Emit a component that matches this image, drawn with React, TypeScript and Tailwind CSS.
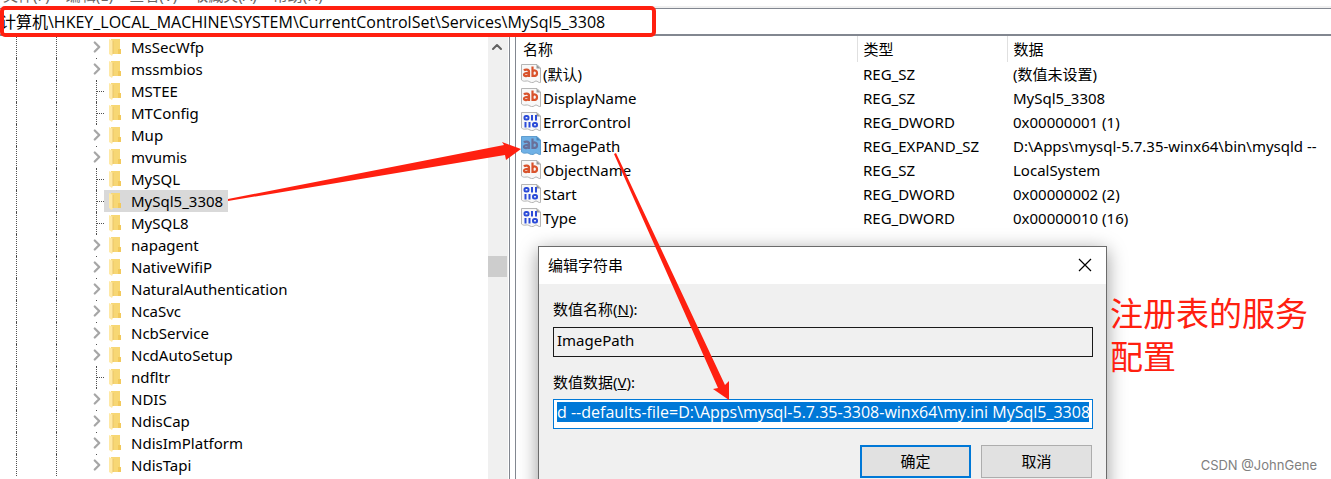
import { ChevronRight, ChevronUp } from "lucide-react";

interface TreeKey {
  name: string;
  leaf?: boolean;
  selected?: boolean;
}

interface RegValue {
  name: string;
  kind: "text" | "binary";
  type: string;
  data: string;
  selected?: boolean;
}

const MENU = ["文件(F)", "编辑(E)", "查看(V)", "收藏夹(A)", "帮助(H)"];

const KEYS: TreeKey[] = [
  { name: "MsSecWfp" },
  { name: "mssmbios" },
  { name: "MSTEE", leaf: true },
  { name: "MTConfig", leaf: true },
  { name: "Mup" },
  { name: "mvumis" },
  { name: "MySQL", leaf: true },
  { name: "MySql5_3308", leaf: true, selected: true },
  { name: "MySQL8", leaf: true },
  { name: "napagent" },
  { name: "NativeWifiP" },
  { name: "NaturalAuthentication" },
  { name: "NcaSvc" },
  { name: "NcbService" },
  { name: "NcdAutoSetup" },
  { name: "ndfltr", leaf: true },
  { name: "NDIS" },
  { name: "NdisCap" },
  { name: "NdisImPlatform" },
  { name: "NdisTapi" },
];

const VALUES: RegValue[] = [
  { name: "(默认)", kind: "text", type: "REG_SZ", data: "(数值未设置)" },
  { name: "DisplayName", kind: "text", type: "REG_SZ", data: "MySql5_3308" },
  { name: "ErrorControl", kind: "binary", type: "REG_DWORD", data: "0x00000001 (1)" },
  {
    name: "ImagePath",
    kind: "text",
    type: "REG_EXPAND_SZ",
    data: "D:\\Apps\\mysql-5.7.35-winx64\\bin\\mysqld --",
    selected: true,
  },
  { name: "ObjectName", kind: "text", type: "REG_SZ", data: "LocalSystem" },
  { name: "Start", kind: "binary", type: "REG_DWORD", data: "0x00000002 (2)" },
  { name: "Type", kind: "binary", type: "REG_DWORD", data: "0x00000010 (16)" },
];

function FolderIcon() {
  return (
    <svg width="12" height="18" viewBox="0 0 12 18" className="shrink-0">
      <path d="M2 1h9v10l1 1v4H3z" fill="#f7d774" />
      <path d="M9 11h3v5H9z" fill="#f2c95c" />
      <path d="M0 1l4 2v13l-1 2-3-2z" fill="#ffe9a6" />
      <path d="M4 3v13" stroke="#e9c469" strokeWidth="1" />
    </svg>
  );
}

function ValueIcon({ kind, selected }: { kind: RegValue["kind"]; selected?: boolean }) {
  return (
    <svg width="20" height="20" viewBox="0 0 20 20" className="shrink-0">
      <path
        d="M.5 .5H16L19.500 4v14.500c-2 .500-3-1.500-4.500-1.500-1.500 0-2 2-4.500 1.500S7.500 16.500 5 17s-3 0-4.500-1z"
        fill={selected ? "#6fb1e6" : "#f8f8f8"}
        stroke={selected ? "#5f9dcf" : "#b5b5b5"}
      />
      <path d="M15.500 .5V4.500h4z" fill={selected ? "#4a86ba" : "#999"} />
      {kind === "text" ? (
        <g fill="none" stroke={selected ? "#69709a" : "#d9532c"} strokeWidth="2.200">
          <path d="M3 6.500c1-1.300 5-1.500 5 1V13M8 9c-3-.300-5 .300-5 1.800 0 2 4 1.600 5-.500" />
          <path d="M11.500 2.500V13M11.500 8c1-2.500 4.500-2 4.500 1.200s-3.500 3.500-4.500 1.500" />
        </g>
      ) : (
        <g fill="none" stroke="#2b4bd8" strokeWidth="2">
          <rect x="3.500" y="4" width="4" height="3.500" rx="1.500" />
          <path d="M11 3v5.500M15 3v5.500M4.500 10v5.500M8.500 10v5.500" />
          <rect x="12" y="11" width="4" height="3.500" rx="1.500" />
        </g>
      )}
    </svg>
  );
}

function TreeRow({ item }: { item: TreeKey }) {
  return (
    <li className="flex h-[22px] items-center">
      <span className="ml-4 h-full w-10 shrink-0 border-l border-dotted border-[#505050]" />
      <span className="h-full w-9 shrink-0 border-l border-dotted border-[#505050]" />
      {item.leaf ? (
        <span className="ml-1 flex h-full w-2 shrink-0 items-center border-l border-dotted border-[#505050]">
          <span className="w-full border-t border-dotted border-[#505050]" />
        </span>
      ) : (
        <span className="flex h-full w-3 shrink-0 flex-col items-center justify-between">
          <span className="-ml-[3px] h-px w-px bg-[#505050]" />
          <ChevronRight size={18} strokeWidth={3} className="-ml-[2px] shrink-0 text-[#a6a6a6]" />
          <span className="h-px w-px" />
        </span>
      )}
      <span
        className={
          item.selected
            ? "flex h-full items-center gap-[10px] bg-[#d9d9d9] pr-[5px] pl-[5px]"
            : "flex h-full items-center gap-[10px] pr-[5px] pl-[5px]"
        }
      >
        <FolderIcon />
        {item.name}
      </span>
    </li>
  );
}

function KeyTree() {
  return (
    <div className="flex w-[510px] shrink-0 border-r border-[#828790] pr-px">
      <ul className="min-w-0 flex-1 overflow-hidden">
        {KEYS.map((item) => (
          <TreeRow key={item.name} item={item} />
        ))}
      </ul>
      {/* Scroll bar */}
      <div className="flex w-5 shrink-0 flex-col bg-[#f0f0f0]">
        <ChevronUp size={16} strokeWidth={3} className="mt-[3px] ml-px text-[#606060]" />
        <div className="mt-[201px] h-[21px] w-[19px] bg-[#cdcdcd]" />
      </div>
    </div>
  );
}

function ValueTable() {
  return (
    <div className="ml-[5px] min-w-0 flex-1 overflow-hidden border-l border-[#828790]">
      <table className="w-full table-fixed border-collapse text-left whitespace-nowrap">
        <colgroup>
          <col className="w-[341px]" />
          <col className="w-[150px]" />
          <col />
        </colgroup>
        <thead>
          <tr className="h-[26px]">
            <th className="border-r border-[#e0e0e0] p-0 pl-[7px] font-normal">名称</th>
            <th className="border-r border-[#e0e0e0] p-0 pl-[6px] font-normal">类型</th>
            <th className="p-0 pl-[6px] font-normal">数据</th>
          </tr>
        </thead>
        <tbody>
          {VALUES.map((v) => (
            <tr key={v.name} className="h-6">
              <td className="p-0 pl-[5px]">
                <span className="flex items-center gap-[2px]">
                  <ValueIcon kind={v.kind} selected={v.selected} />
                  {v.name}
                </span>
              </td>
              <td className="p-0 pl-[6px]">{v.type}</td>
              <td className="p-0 pl-[6px]">{v.data}</td>
            </tr>
          ))}
        </tbody>
      </table>
    </div>
  );
}

function EditDialog() {
  return (
    <div
      role="dialog"
      aria-label="编辑字符串"
      className="absolute top-[246px] left-[538px] w-[569px] border border-[#6b6b6b] bg-[#f0f0f0] shadow-[0_4px_18px_rgba(0,0,0,0.4)]"
    >
      <div className="flex h-[37px] items-center justify-between bg-white pr-[14px] pb-px pl-[9px]">
        <h2>编辑字符串</h2>
        <button aria-label="关闭">
          <svg width="14" height="14" viewBox="0 0 14 14">
            <path d="M1 1l12 12M13 1L1 13" stroke="#000" strokeWidth="1.200" />
          </svg>
        </button>
      </div>
      <form className="flex flex-col pt-[13px] pr-[13px] pb-6 pl-[14px]">
        <label htmlFor="value-name" className="leading-6">
          数值名称(<u>N</u>):
        </label>
        <input
          id="value-name"
          readOnly
          value="ImagePath"
          className="mt-[6px] h-[30px] border border-[#1a1a1a] bg-[#f0f0f0] px-[3px] pb-1 outline-none"
        />
        <label htmlFor="value-data" className="mt-[13px] leading-6">
          数值数据(<u>V</u>):
        </label>
        <div className="mt-[5px] h-[30px] border border-[#0078d7] bg-white px-[3px] pt-[2px]">
          <input
            id="value-data"
            readOnly
            value="d --defaults-file=D:\Apps\mysql-5.7.35-3308-winx64\my.ini MySql5_3308"
            className="block h-5 w-full bg-[#0078d7] font-['Open_Sans',sans-serif] text-base leading-5 text-white outline-none"
          />
        </div>
        <div className="mt-4 flex justify-end gap-[10px] pr-px">
          <button type="button" className="h-[33px] w-[111px] border-2 border-[#0078d7] bg-[#e1e1e1] pb-px">
            确定
          </button>
          <button type="button" className="h-[33px] w-[111px] border border-[#adadad] bg-[#e1e1e1] pb-px">
            取消
          </button>
        </div>
      </form>
    </div>
  );
}

function Arrows() {
  return (
    <svg className="pointer-events-none absolute top-0 left-0 h-full w-full" fill="#ff2010">
      <path d="M228 199L504 145 502 142 521 149 506 160 505 155 228 201z" />
      <path d="M614 154L616 153 725 385 729 381 729 400 713 389 718 388z" />
    </svg>
  );
}

export default function App() {
  return (
    <div className="relative flex h-screen flex-col overflow-hidden bg-white font-['Noto_Sans','Noto_Sans_CJK_SC',sans-serif] text-[15px] leading-5 text-black">
      <nav className="flex h-2 shrink-0 items-end gap-4 overflow-hidden border-b-2 border-[#f0f0f0] pb-px pl-[3px] text-[#666]">
        {MENU.map((label) => (
          <span key={label}>{label}</span>
        ))}
      </nav>
      <input
        aria-label="地址"
        readOnly
        value="计算机\HKEY_LOCAL_MACHINE\SYSTEM\CurrentControlSet\Services\MySql5_3308"
        className="h-7 w-full shrink-0 border-t border-b-2 border-[#828790] pb-[2px] font-['Open_Sans','Noto_Sans_CJK_SC',sans-serif] text-base leading-5 outline-none"
      />
      <main className="flex min-h-0 flex-1">
        <KeyTree />
        <ValueTable />
      </main>

      <EditDialog />

      {/* Annotations */}
      <div className="absolute top-[6px] left-0 h-[31px] w-[656px] rounded-[5px] border-4 border-[#ff2010]" />
      <Arrows />
      <p className="absolute top-[292px] left-[1110px] w-[210px] text-[33px] leading-[43px] text-[#ff2010]">
        注册表的服务配置
      </p>
      <p className="absolute right-[14px] bottom-1 font-['Inter',sans-serif] text-[13px] text-[#808080]">
        CSDN @JohnGene
      </p>
    </div>
  );
}
